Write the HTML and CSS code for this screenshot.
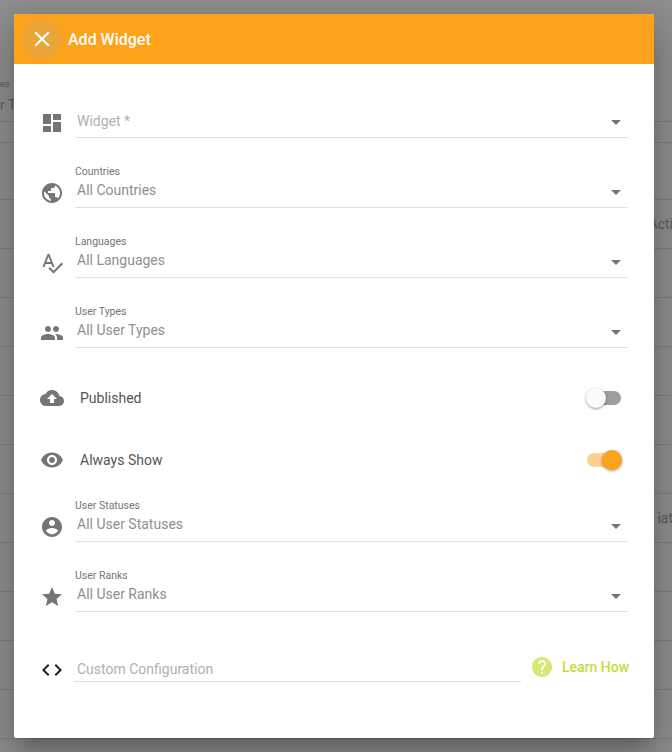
FILE: index.html
```html
<!DOCTYPE html>
<html lang="en">
<head>
    <meta charset="UTF-8">
    <title>Add Widget</title>
    <link rel="stylesheet" href="styles.css">
</head>
<body>
    <!-- table behind the dialog -->
    <div class="backdrop">
        <div class="bg-head"><span class="bg-small">es</span><span class="bg-text">r T</span></div>
        <div class="bg-row bg-short"></div>
        <div class="bg-row bg-tall"></div>
        <div class="bg-row"><span class="bg-right">Acti</span></div>
        <div class="bg-row"></div>
        <div class="bg-row"></div>
        <div class="bg-row"></div>
        <div class="bg-row"></div>
        <div class="bg-row"></div>
        <div class="bg-row"><span class="bg-right">iat</span></div>
        <div class="bg-row"></div>
        <div class="bg-row"></div>
        <div class="bg-row"></div>
        <div class="bg-row"></div>
    </div>

    <div class="dialog">
        <header class="dialog-header">
            <button class="close-btn">
                <svg class="icon" viewBox="0 0 24 24"><path d="M19 6.41L17.59 5 12 10.59 6.41 5 5 6.41 10.59 12 5 17.59 6.41 19 12 13.41 17.59 19 19 17.59 13.41 12z"/></svg>
            </button>
            <h1>Add Widget</h1>
        </header>

        <div class="dialog-body">
            <div class="field field-first">
                <svg class="icon field-icon" viewBox="0 0 24 24"><path d="M3 13h8V3H3v10zm0 8h8v-6H3v6zm10 0h8V11h-8v10zm0-18v6h8V3h-8z"/></svg>
                <div class="select">
                    <span class="value placeholder">Widget *</span>
                    <span class="arrow"></span>
                </div>
            </div>

            <div class="field">
                <svg class="icon field-icon" viewBox="0 0 24 24"><path d="M12 2C6.48 2 2 6.48 2 12s4.48 10 10 10 10-4.48 10-10S17.52 2 12 2zm-1 17.93c-3.95-.49-7-3.85-7-7.93 0-.62.08-1.21.21-1.79L9 15v1c0 1.1.9 2 2 2v1.93zm6.9-2.54c-.26-.81-1-1.39-1.9-1.39h-1v-3c0-.55-.45-1-1-1H8v-2h2c.55 0 1-.45 1-1V7h2c1.1 0 2-.9 2-2v-.41c2.93 1.19 5 4.06 5 7.41 0 2.08-.8 3.97-2.1 5.39z"/></svg>
                <div class="select">
                    <label>Countries</label>
                    <span class="value">All Countries</span>
                    <span class="arrow"></span>
                </div>
            </div>

            <div class="field">
                <svg class="icon field-icon" viewBox="0 0 24 24"><path d="M12.45 16h2.09L9.43 3H7.57L2.46 16h2.09l1.12-3h5.64l1.14 3zm-6.02-5L8.5 5.48 10.57 11H6.43zm15.16.59l-8.09 8.09L9.83 16l-1.41 1.41 5.09 5.09L23 13l-1.41-1.41z"/></svg>
                <div class="select">
                    <label>Languages</label>
                    <span class="value">All Languages</span>
                    <span class="arrow"></span>
                </div>
            </div>

            <div class="field">
                <svg class="icon field-icon" viewBox="0 0 24 24"><path d="M16 11c1.66 0 2.99-1.34 2.99-3S17.66 5 16 5c-1.66 0-3 1.34-3 3s1.34 3 3 3zm-8 0c1.66 0 2.99-1.34 2.99-3S9.66 5 8 5C6.34 5 5 6.34 5 8s1.34 3 3 3zm0 2c-2.33 0-7 1.17-7 3.5V19h14v-2.5c0-2.33-4.67-3.5-7-3.5zm8 0c-.29 0-.62.02-.97.05 1.16.84 1.97 1.97 1.97 3.45V19h6v-2.5c0-2.33-4.67-3.5-7-3.5z"/></svg>
                <div class="select">
                    <label>User Types</label>
                    <span class="value">All User Types</span>
                    <span class="arrow"></span>
                </div>
            </div>

            <div class="toggle-row toggle-first">
                <svg class="icon toggle-icon" viewBox="0 0 24 24"><path d="M19.35 10.04C18.67 6.59 15.64 4 12 4 9.11 4 6.6 5.64 5.35 8.04 2.34 8.36 0 10.91 0 14c0 3.31 2.69 6 6 6h13c2.76 0 5-2.24 5-5 0-2.64-2.05-4.78-4.65-4.96zM14 13v4h-4v-4H7l5-5 5 5h-3z"/></svg>
                <span class="toggle-label">Published</span>
                <span class="switch"><span class="thumb"></span></span>
            </div>

            <div class="toggle-row">
                <svg class="icon toggle-icon" viewBox="0 0 24 24"><path d="M12 4.5C7 4.5 2.73 7.61 1 12c1.73 4.39 6 7.5 11 7.5s9.27-3.11 11-7.5c-1.73-4.39-6-7.5-11-7.5zM12 17c-2.76 0-5-2.24-5-5s2.24-5 5-5 5 2.24 5 5-2.24 5-5 5zm0-8c-1.66 0-3 1.34-3 3s1.34 3 3 3 3-1.34 3-3-1.34-3-3-3z"/></svg>
                <span class="toggle-label">Always Show</span>
                <span class="switch switch-on"><span class="thumb"></span></span>
            </div>

            <div class="field field-after-toggle">
                <svg class="icon field-icon" viewBox="0 0 24 24"><path d="M12 2C6.48 2 2 6.48 2 12s4.48 10 10 10 10-4.48 10-10S17.52 2 12 2zm0 3c1.66 0 3 1.34 3 3s-1.34 3-3 3-3-1.34-3-3 1.34-3 3-3zm0 14.2c-2.5 0-4.71-1.28-6-3.22.03-1.99 4-3.08 6-3.08 1.99 0 5.97 1.09 6 3.08-1.29 1.94-3.5 3.22-6 3.22z"/></svg>
                <div class="select">
                    <label>User Statuses</label>
                    <span class="value">All User Statuses</span>
                    <span class="arrow"></span>
                </div>
            </div>

            <div class="field">
                <svg class="icon field-icon" viewBox="0 0 24 24"><path d="M12 17.27L18.18 21l-1.64-7.03L22 9.24l-7.19-.61L12 2 9.19 8.63 2 9.24l5.46 4.73L5.82 21z"/></svg>
                <div class="select">
                    <label>User Ranks</label>
                    <span class="value">All User Ranks</span>
                    <span class="arrow"></span>
                </div>
            </div>

            <div class="field field-config">
                <svg class="icon field-icon icon-dark" viewBox="0 0 24 24"><path d="M9.4 16.6L4.8 12l4.6-4.6L8 6l-6 6 6 6 1.4-1.4zm5.2 0l4.6-4.6-4.6-4.6L16 6l6 6-6 6-1.4-1.4z"/></svg>
                <div class="config-input">
                    <span class="value placeholder">Custom Configuration</span>
                </div>
                <a class="learn-how">
                    <svg class="icon help-icon" viewBox="0 0 24 24"><path d="M12 2C6.48 2 2 6.48 2 12s4.48 10 10 10 10-4.48 10-10S17.52 2 12 2zm1 17h-2v-2h2v2zm2.07-7.75l-.9.92C13.45 12.9 13 13.5 13 15h-2v-.5c0-1.1.45-2.1 1.17-2.83l1.24-1.26c.37-.36.59-.86.59-1.41 0-1.1-.9-2-2-2s-2 .9-2 2H8c0-2.21 1.79-4 4-4s4 1.79 4 4c0 .88-.36 1.68-.93 2.25z"/></svg>
                    Learn How
                </a>
            </div>
        </div>
    </div>
</body>
</html>
```

FILE: styles.css
```css
* {
    box-sizing: border-box;
}

html, body {
    height: 100%;
}

body {
    margin: 0;
    font-family: Roboto, "Liberation Sans", sans-serif;
    background: #8f8f8f;
    overflow: hidden;
}

.backdrop {
    color: #5c5c5c;
    font-size: 14px;
}

.bg-head {
    height: 122px;
    padding-top: 78px;
    border-bottom: 1px solid #7e7e7e;
}

.bg-small {
    display: block;
    font-size: 9px;
    line-height: 12px;
}

.bg-text {
    display: block;
    margin-top: 3px;
    line-height: 24px;
}

.bg-row {
    height: 49px;
    border-bottom: 1px solid #7e7e7e;
    text-align: right;
}

.bg-short {
    height: 21px;
}

.bg-tall {
    height: 57px;
}

.bg-right {
    display: block;
    padding-top: 16px;
    margin-right: -1px;
}

/* dialog */
.dialog {
    position: absolute;
    top: 14px;
    left: 14px;
    width: 640px;
    height: 724px;
    background: #fff;
    border-radius: 2px;
    box-shadow: 0 11px 15px -7px rgba(0,0,0,0.2), 0 24px 38px 3px rgba(0,0,0,0.14), 0 9px 46px 8px rgba(0,0,0,0.12);
}

.dialog-header {
    display: flex;
    align-items: center;
    height: 50px;
    padding-left: 8px;
    background: #fda31b;
    border-radius: 2px 2px 0 0;
}

.dialog-header h1 {
    margin: 0 0 0 6px;
    font-size: 16px;
    font-weight: 500;
    color: #fff;
}

.close-btn {
    display: flex;
    align-items: center;
    justify-content: center;
    width: 40px;
    height: 40px;
    padding: 0;
    border: none;
    border-radius: 50%;
    background: #eba436;
}

.close-btn .icon {
    width: 26px;
    height: 26px;
    fill: #fff;
}

.icon {
    display: block;
    width: 24px;
    height: 24px;
    fill: #757575;
    flex-shrink: 0;
}

.icon-dark {
    fill: #212121;
}

.dialog-body {
    padding: 24px 26px 0 26px;
}

.field {
    display: flex;
    align-items: flex-end;
    margin-top: 20px;
    height: 50px;
}

.field-first {
    margin-top: 0;
}

.field-after-toggle {
    margin-top: 1px;
}

.field-icon {
    margin-bottom: 3px;
}

.select {
    position: relative;
    flex: 1;
    height: 50px;
    margin-left: 11px;
    padding: 8px 0 0 0;
    border-bottom: 1px solid #e0e0e0;
}

.select label {
    display: block;
    font-size: 10.5px;
    line-height: 12px;
    color: #757575;
}

.value {
    display: block;
    margin-top: 2px;
    padding-left: 2px;
    font-size: 14px;
    line-height: 20px;
    color: #8f8f8f;
}

.placeholder {
    color: #b0b0b0;
}

.field-first .value {
    margin-top: 15px;
}

.arrow {
    position: absolute;
    right: 7px;
    bottom: 12px;
    width: 0;
    height: 0;
    border-left: 5px solid transparent;
    border-right: 5px solid transparent;
    border-top: 5px solid #757575;
}

.toggle-row {
    display: flex;
    align-items: center;
    height: 62px;
}

.toggle-first {
    margin-top: 19px;
}

.toggle-label {
    flex: 1;
    margin-left: 16px;
    font-size: 14px;
    color: #555;
}

.switch {
    position: relative;
    width: 34px;
    height: 14px;
    margin-right: 7px;
    border-radius: 7px;
    background: #9e9e9e;
}

.thumb {
    position: absolute;
    top: -3px;
    left: -1px;
    width: 20px;
    height: 20px;
    border-radius: 50%;
    background: #fafafa;
    box-shadow: 0 1px 3px rgba(0,0,0,0.4);
}

.switch-on {
    background: #fed08c;
}

.switch-on .thumb {
    left: 15px;
    background: #fda31b;
}

.field-config {
    margin-top: 20px;
    height: 70px;
    position: relative;
}

.config-input {
    flex: 0 0 447px;
    height: 40px;
    margin-left: 10px;
    margin-bottom: 20px;
    border-bottom: 1px solid #e0e0e0;
}

.config-input .value {
    margin-top: 17px;
    padding-left: 3px;
}

.field-config .field-icon {
    margin-bottom: 20px;
}

.learn-how {
    display: flex;
    align-items: center;
    gap: 8px;
    margin-left: 9px;
    margin-bottom: 23px;
    font-size: 14px;
    font-weight: 500;
    color: #c3dc3e;
    white-space: nowrap;
}

.help-icon {
    fill: #d6e774;
}
```
